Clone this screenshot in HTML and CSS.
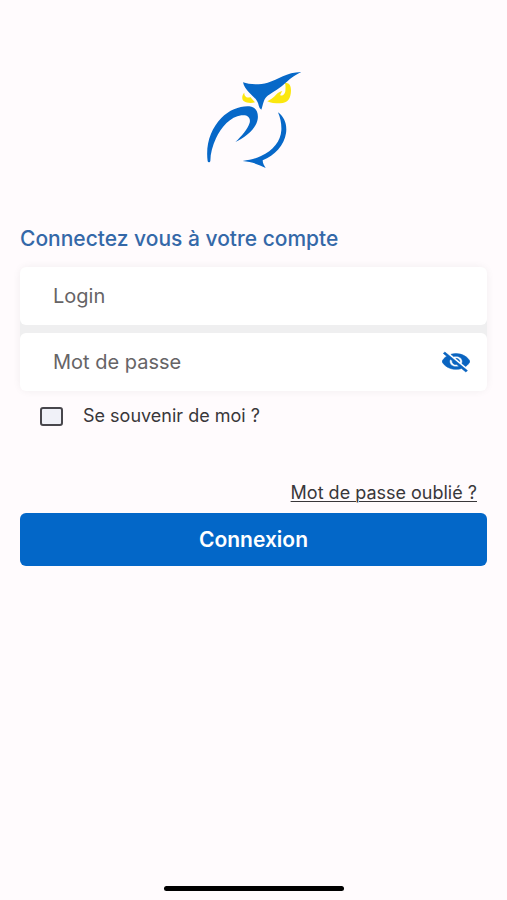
FILE: index.html
```html
<!DOCTYPE html>
<html lang="fr">
<head>
<meta charset="utf-8">
<meta name="viewport" content="width=device-width, initial-scale=1">
<title>Connexion</title>
<link rel="stylesheet" href="styles.css">
</head>
<body>
<main class="screen">
  <svg class="logo" viewBox="27 30 300 300" aria-hidden="true">
    <g fill="#fbe70f">
      <path d="M270 69C283 67 288 76 288 92C287 115 280 128 255 130C240 130 226 129 217 124C226 119 236 112 243 104C249 98 256 95 262 93C259 97 258 102 255 105C262 110 269 104 271 94C272 85 272 76 270 69Z"/>
      <path d="M148 98C141 104 139 118 147 124C155 129 168 130 180 127C175 122 171 116 166 111C160 115 153 112 150 107C148 104 148 101 148 98Z"/>
    </g>
    <g fill="#0768c8">
      <path d="M144 67C163 74 193 75 218 68C251 58 273 37 319 36C294 48 281 60 267 73C249 89 226 100 214 111C205 121 205 132 199 149C190 143 192 132 186 123C177 108 149 92 144 67Z"/>
      <path d="M38 304C31 252 48 206 79 174C103 149 137 137 163 139C184 142 191 158 188 178C184 205 151 234 121 246C139 229 158 208 164 188C168 171 155 163 139 166C107 170 78 202 63 235C53 257 46 281 46 303C45 308 39 308 38 304Z"/>
      <path d="M249 157C268 171 277 193 273 220C268 255 239 287 203 301C203 309 207 317 212 324C192 314 169 305 143 303C164 300 182 296 198 288C235 272 257 243 259 211C260 191 256 174 249 157Z"/>
    </g>
  </svg>

  <form class="login">
    <h1 class="title">Connectez vous à votre compte</h1>
    <div class="fields">
      <div class="field">
        <input class="input" type="text" aria-label="Login" placeholder="Login" autocomplete="username">
      </div>
      <div class="field">
        <input class="input" type="password" aria-label="Mot de passe" placeholder="Mot de passe" autocomplete="current-password">
        <button class="toggle" type="button" aria-label="Afficher le mot de passe">
          <svg class="eye" viewBox="1 2 22 21" preserveAspectRatio="none" aria-hidden="true">
            <path d="M12 7c2.760 0 5 2.240 5 5 0 .650-.130 1.260-.360 1.830l2.920 2.920c1.510-1.260 2.700-2.890 3.430-4.750-1.730-4.390-6-7.500-11-7.500-1.400 0-2.740.250-3.980.700l2.160 2.160C10.740 7.130 11.350 7 12 7zM2 4.270l2.280 2.280.460.460C3.080 8.300 1.780 10.020 1 12c1.730 4.390 6 7.500 11 7.500 1.550 0 3.030-.300 4.380-.840l.420.420L19.730 22 21 20.730 3.270 3 2 4.270zM7.530 9.800l1.550 1.550c-.050.210-.080.430-.080.650 0 1.660 1.340 3 3 3 .220 0 .440-.030.650-.080l1.550 1.550c-.670.330-1.410.530-2.200.530-2.760 0-5-2.240-5-5 0-.790.200-1.530.530-2.200zm4.310-.780l3.150 3.150.020-.160c0-1.660-1.340-3-3-3l-.170.010z"/>
          </svg>
        </button>
      </div>
    </div>
    <label class="remember">
      <input class="checkbox" type="checkbox">
      <span>Se souvenir de moi ?</span>
    </label>
    <a class="forgot" href="#">Mot de passe oublié ?</a>
    <button class="submit" type="submit">Connexion</button>
  </form>

  <div class="home-indicator"></div>
</main>
</body>
</html>
```

FILE: styles.css
```css
* {
  box-sizing: border-box;
}

body {
  margin: 0;
  background: #fffbfd;
  color: #39373a;
  font-family: Inter, "Liberation Sans", sans-serif;
  font-size: 18px;
}

.screen {
  display: flex;
  flex-direction: column;
  align-items: center;
  min-height: 100vh;
  padding: 70px 20px 9px;
}

.logo {
  width: 100px;
  height: 100px;
}

.login {
  display: flex;
  flex-direction: column;
  width: 100%;
  margin-top: 56px;
}

.title {
  margin: 0 0 16px;
  color: #3468a8;
  font-size: 21px;
  font-weight: 500;
  line-height: 25px;
}

.fields {
  display: flex;
  flex-direction: column;
  gap: 8px;
  border-radius: 8px;
  background: #efeff0;
  box-shadow: 0 0 8px rgba(0, 0, 0, 0.06);
}

.field {
  display: flex;
  align-items: center;
  height: 58px;
  padding: 0 17px 0 33px;
  border-radius: 6px;
  background: #ffffff;
}

.input {
  flex: 1;
  min-width: 0;
  height: 100%;
  padding: 0;
  border: 0;
  outline: 0;
  background: transparent;
  color: #39373a;
  font: inherit;
  font-size: 20px;
}

.input::placeholder {
  color: #666466;
  opacity: 1;
}

.toggle {
  display: flex;
  padding: 0;
  border: 0;
  background: transparent;
}

.eye {
  width: 28px;
  height: 22px;
  fill: #0a64c0;
  stroke: #0a64c0;
  stroke-width: 0.5;
}

.remember {
  display: flex;
  align-items: center;
  align-self: flex-start;
  gap: 20px;
  margin: 13px 0 0 20px;
  line-height: 24px;
}

.checkbox {
  appearance: none;
  width: 23px;
  height: 19px;
  margin: 0;
  border: 2px solid #48464c;
  border-radius: 3px;
  background: #f0f1f8;
}

.checkbox:checked {
  background: #0367c8;
}

.forgot {
  align-self: flex-end;
  margin: 53px 10px 8px;
  color: inherit;
  line-height: 24px;
  text-decoration-thickness: 1px;
  text-underline-offset: 2px;
}

.submit {
  height: 53px;
  border: 0;
  border-radius: 6px;
  background: #0367c8;
  color: #ffffff;
  font: inherit;
  font-size: 21px;
  font-weight: 600;
}

.home-indicator {
  width: 180px;
  height: 5px;
  margin-top: auto;
  border-radius: 3px;
  background: #000000;
}
```
